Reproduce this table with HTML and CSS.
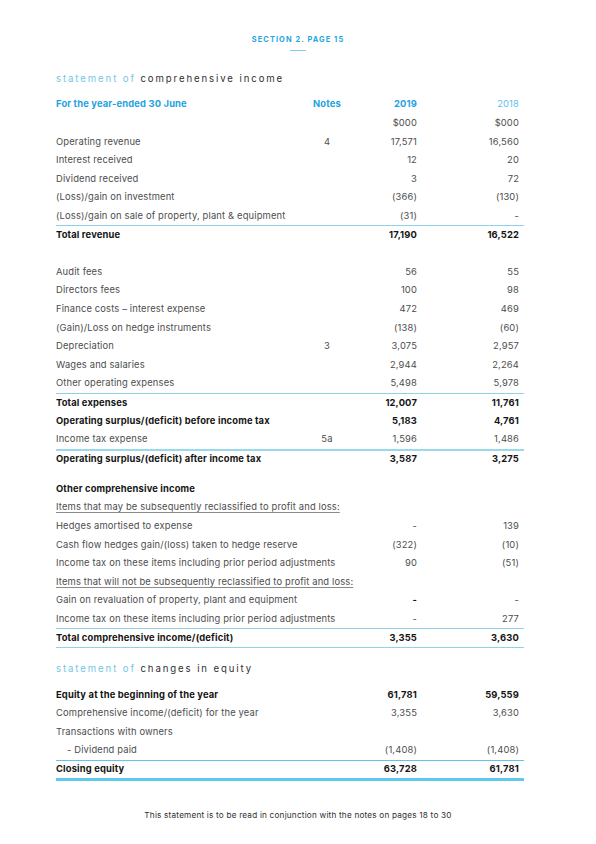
FILE: index.html
```html
<!DOCTYPE html>
<html lang="en">
<head>
<meta charset="utf-8">
<title>Statement of comprehensive income</title>
<link rel="stylesheet" href="styles.css">
</head>
<body>
<div class="page">
  <header class="section-head">
    <div class="section-label">SECTION 2. PAGE 15</div>
    <div class="section-bar"></div>
  </header>

  <h2 class="stmt-title"><span class="light">statement of</span> comprehensive income</h2>

  <div class="table">
    <div class="row head">
      <div class="label">For the year-ended 30 June</div>
      <div class="note">Notes</div>
      <div class="num">2019</div>
      <div class="num prev">2018</div>
    </div>
    <div class="row"><div class="label"></div><div class="note"></div><div class="num">$000</div><div class="num">$000</div></div>
    <div class="row"><div class="label">Operating revenue</div><div class="note">4</div><div class="num">17,571</div><div class="num">16,560</div></div>
    <div class="row"><div class="label">Interest received</div><div class="note"></div><div class="num">12</div><div class="num">20</div></div>
    <div class="row"><div class="label">Dividend received</div><div class="note"></div><div class="num">3</div><div class="num">72</div></div>
    <div class="row"><div class="label">(Loss)/gain on investment</div><div class="note"></div><div class="num">(366)</div><div class="num">(130)</div></div>
    <div class="row"><div class="label">(Loss)/gain on sale of property, plant &amp; equipment</div><div class="note"></div><div class="num">(31)</div><div class="num">-</div></div>
    <div class="row bold rule-thin"><div class="label">Total revenue</div><div class="note"></div><div class="num">17,190</div><div class="num">16,522</div></div>
    <div class="row"></div>
    <div class="row"><div class="label">Audit fees</div><div class="note"></div><div class="num">56</div><div class="num">55</div></div>
    <div class="row"><div class="label">Directors fees</div><div class="note"></div><div class="num">100</div><div class="num">98</div></div>
    <div class="row"><div class="label">Finance costs – interest expense</div><div class="note"></div><div class="num">472</div><div class="num">469</div></div>
    <div class="row"><div class="label">(Gain)/Loss on hedge instruments</div><div class="note"></div><div class="num">(138)</div><div class="num">(60)</div></div>
    <div class="row"><div class="label">Depreciation</div><div class="note">3</div><div class="num">3,075</div><div class="num">2,957</div></div>
    <div class="row"><div class="label">Wages and salaries</div><div class="note"></div><div class="num">2,944</div><div class="num">2,264</div></div>
    <div class="row"><div class="label">Other operating expenses</div><div class="note"></div><div class="num">5,498</div><div class="num">5,978</div></div>
    <div class="row bold rule-thin"><div class="label">Total expenses</div><div class="note"></div><div class="num">12,007</div><div class="num">11,761</div></div>
    <div class="row bold"><div class="label">Operating surplus/(deficit) before income tax</div><div class="note"></div><div class="num">5,183</div><div class="num">4,761</div></div>
    <div class="row"><div class="label">Income tax expense</div><div class="note">5a</div><div class="num">1,596</div><div class="num">1,486</div></div>
    <div class="row bold rule-mid"><div class="label">Operating surplus/(deficit) after income tax</div><div class="note"></div><div class="num">3,587</div><div class="num">3,275</div></div>
    <div class="spacer"></div>
    <div class="row bold"><div class="label">Other comprehensive income</div></div>
    <div class="row"><div class="label"><span class="ul">Items that may be subsequently reclassified to profit and loss:</span></div></div>
    <div class="row"><div class="label">Hedges amortised to expense</div><div class="note"></div><div class="num">-</div><div class="num">139</div></div>
    <div class="row"><div class="label">Cash flow hedges gain/(loss) taken to hedge reserve</div><div class="note"></div><div class="num">(322)</div><div class="num">(10)</div></div>
    <div class="row"><div class="label">Income tax on these items including prior period adjustments</div><div class="note"></div><div class="num">90</div><div class="num">(51)</div></div>
    <div class="row"><div class="label"><span class="ul">Items that will not be subsequently reclassified to profit and loss:</span></div></div>
    <div class="row"><div class="label">Gain on revaluation of property, plant and equipment</div><div class="note"></div><div class="num strong">-</div><div class="num">-</div></div>
    <div class="row"><div class="label">Income tax on these items including prior period adjustments</div><div class="note"></div><div class="num">-</div><div class="num">277</div></div>
    <div class="row bold rule-thin close-mid"><div class="label">Total comprehensive income/(deficit)</div><div class="note"></div><div class="num">3,355</div><div class="num">3,630</div></div>
  </div>

  <h2 class="stmt-title second"><span class="light">statement of</span> changes in equity</h2>

  <div class="table">
    <div class="row bold"><div class="label">Equity at the beginning of the year</div><div class="note"></div><div class="num">61,781</div><div class="num">59,559</div></div>
    <div class="row"><div class="label">Comprehensive income/(deficit) for the year</div><div class="note"></div><div class="num">3,355</div><div class="num">3,630</div></div>
    <div class="row"><div class="label">Transactions with owners</div></div>
    <div class="row"><div class="label indent">- Dividend paid</div><div class="note"></div><div class="num">(1,408)</div><div class="num">(1,408)</div></div>
    <div class="row bold rule-blue close-thick"><div class="label">Closing equity</div><div class="note"></div><div class="num">63,728</div><div class="num">61,781</div></div>
  </div>

  <footer class="foot">This statement is to be read in conjunction with the notes on pages 18 to 30</footer>
</div>
</body>
</html>
```

FILE: styles.css
```css
* { box-sizing: border-box; }
html, body { margin: 0; padding: 0; background: #ffffff; }
body {
  font-family: Inter, "Noto Sans", "Liberation Sans", sans-serif;
  color: #4a4a4a;
}
.page {
  width: 596px;
  height: 844px;
  padding: 35px 72px 0 56px;
  position: relative;
}
.section-head {
  display: flex;
  flex-direction: column;
  align-items: center;
  margin-left: -56px;
  margin-right: -72px;
}
.section-label {
  font-size: 7.4px;
  font-weight: 700;
  letter-spacing: 1.1px;
  color: #23a7df;
  line-height: 10px;
}
.section-bar {
  width: 16px;
  height: 1px;
  background: #7fd0ee;
  margin-top: 5px;
}
.stmt-title {
  margin: 22px 0 0 0;
  font-size: 9.6px;
  font-weight: 400;
  letter-spacing: 1.9px;
  line-height: 12px;
  color: #2f2f2f;
}
.stmt-title .light { color: #74c6e6; }
.stmt-title.second { margin-top: 15px; }

.table { margin-top: 10px; }
.stmt-title.second + .table { margin-top: 10px; }

.row {
  display: grid;
  grid-template-columns: 241px 60px 60px 102px;
  height: 18.62px;
  align-items: center;
  font-size: 9.4px;
  line-height: 12px;
  letter-spacing: 0.15px;
  color: #4d4d4d;
}
.row .label { white-space: nowrap; }
.row .note { text-align: center; }
.row .num { text-align: right; }
.row.head { color: #1ea3df; font-weight: 700; }
.row.head .num.prev { font-weight: 400; color: #5bbfea; }
.row.bold { font-weight: 700; color: #151515; }
.num.strong { font-weight: 700; color: #151515; }
.indent { padding-left: 11px; }
.ul {
  text-decoration: underline;
  text-decoration-color: #8a8a8a;
  text-underline-offset: 2px;
  text-decoration-thickness: 0.6px;
}

.rule-thin { border-top: 1px solid #8fd2ea; width: 468px; }
.rule-mid { border-top: 2px solid #9ad8ec; width: 468px; }
.rule-blue { border-top: 1px solid #62c4ea; width: 468px; }
.close-mid { border-bottom: 1.5px solid #8fd2ea; height: 20px; }
.close-thick { border-bottom: 3px solid #5ec8ef; height: 21px; }

.spacer { height: 12.3px; }

.foot {
  position: absolute;
  left: 0;
  right: 0;
  top: 810px;
  text-align: center;
  font-size: 8.2px;
  letter-spacing: 0.2px;
  line-height: 10px;
  color: #2f2f2f;
}
```
